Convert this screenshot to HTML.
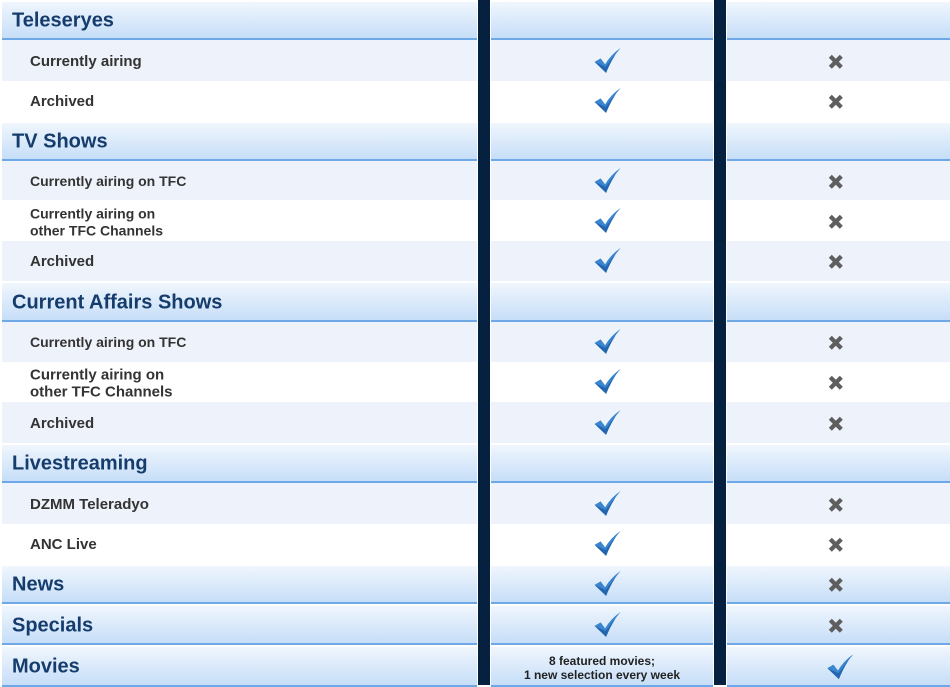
<!DOCTYPE html>
<html><head><style>
body{margin:0;width:950px;height:685px;background:#fff;position:relative;overflow:hidden;font-family:"Liberation Sans",Arial,sans-serif}
.r{position:absolute;left:0;width:950px}
.c{position:absolute;top:0;bottom:0}
.c1{left:2px;width:475px}.c2{left:491px;width:222px}.c3{left:727px;width:223px}
.H .c{background:linear-gradient(#f0f6fd,#c6def8);border-top:2px solid #fff;border-bottom:2px solid #6ea8e6;box-sizing:border-box}
.L .c{background:#eef3fb}
.W .c{background:#fff}
.H .t{position:absolute;left:10px;top:50%;transform:translateY(-45%);font-size:20px;font-weight:bold;color:#153c6c}
.s{position:absolute;left:28px;top:50%;transform:translateY(-46%);font-size:15px;font-weight:bold;color:#333;line-height:17px}
.bar{position:absolute;top:0;height:685px;width:12px;background:#06203f}
.ic{position:absolute;left:50%;top:50%;transform:translate(-30%,-50%)}
.ix{position:absolute;left:50%;top:50%;transform:translate(-70%,-45%)}
.m{position:absolute;left:0;right:0;top:50%;transform:translateY(-42%);text-align:center;font-size:12px;font-weight:bold;color:#222;line-height:14px}
</style></head><body>
<svg width="0" height="0" style="position:absolute"><defs>
<symbol id="ck" viewBox="0 0 28 26"><path d="M1 14 L7 10.5 L11.5 16.5 Q17 7 27 0 Q24 2.5 21 8 Q16 16 12.5 25 Z" fill="#2266b0"/><path d="M1 14 L7 10.5 L11.5 16.5 Q17 7 27 0 Q22 6 12 19 Z" fill="#3a86d0"/></symbol>
<symbol id="x" viewBox="0 0 16 16"><path d="M1 4 L4 1 L8 5 L12 1 L15 4 L11 8 L15 12 L12 15 L8 11 L4 15 L1 12 L5 8 Z" fill="#5e5e5e"/></symbol>
</defs></svg>

<div class="r H" style="top:0;height:40px"><div class="c c1"><span class="t">Teleseryes</span></div><div class="c c2"></div><div class="c c3"></div></div>
<div class="r L" style="top:40px;height:41px"><div class="c c1"><span class="s">Currently airing</span></div><div class="c c2"><svg class="ic" width="28" height="26"><use href="#ck"/></svg></div><div class="c c3"><svg class="ix" width="16" height="16"><use href="#x"/></svg></div></div>
<div class="r W" style="top:81px;height:40px"><div class="c c1"><span class="s">Archived</span></div><div class="c c2"><svg class="ic" width="28" height="26"><use href="#ck"/></svg></div><div class="c c3"><svg class="ix" width="16" height="16"><use href="#x"/></svg></div></div>
<div class="r H" style="top:121px;height:40px"><div class="c c1"><span class="t">TV Shows</span></div><div class="c c2"></div><div class="c c3"></div></div>
<div class="r L" style="top:161px;height:39px"><div class="c c1"><span class="s" style="font-size:14px">Currently airing on TFC</span></div><div class="c c2"><svg class="ic" width="28" height="26"><use href="#ck"/></svg></div><div class="c c3"><svg class="ix" width="16" height="16"><use href="#x"/></svg></div></div>
<div class="r W" style="top:200px;height:41px"><div class="c c1"><span class="s" style="font-size:14px">Currently airing on<br>other TFC Channels</span></div><div class="c c2"><svg class="ic" width="28" height="26"><use href="#ck"/></svg></div><div class="c c3"><svg class="ix" width="16" height="16"><use href="#x"/></svg></div></div>
<div class="r L" style="top:241px;height:40px"><div class="c c1"><span class="s">Archived</span></div><div class="c c2"><svg class="ic" width="28" height="26"><use href="#ck"/></svg></div><div class="c c3"><svg class="ix" width="16" height="16"><use href="#x"/></svg></div></div>
<div class="r H" style="top:281px;height:41px"><div class="c c1"><span class="t">Current Affairs Shows</span></div><div class="c c2"></div><div class="c c3"></div></div>
<div class="r L" style="top:322px;height:40px"><div class="c c1"><span class="s" style="font-size:14px">Currently airing on TFC</span></div><div class="c c2"><svg class="ic" width="28" height="26"><use href="#ck"/></svg></div><div class="c c3"><svg class="ix" width="16" height="16"><use href="#x"/></svg></div></div>
<div class="r W" style="top:362px;height:40px"><div class="c c1"><span class="s">Currently airing on<br>other TFC Channels</span></div><div class="c c2"><svg class="ic" width="28" height="26"><use href="#ck"/></svg></div><div class="c c3"><svg class="ix" width="16" height="16"><use href="#x"/></svg></div></div>
<div class="r L" style="top:402px;height:41px"><div class="c c1"><span class="s">Archived</span></div><div class="c c2"><svg class="ic" width="28" height="26"><use href="#ck"/></svg></div><div class="c c3"><svg class="ix" width="16" height="16"><use href="#x"/></svg></div></div>
<div class="r H" style="top:443px;height:40px"><div class="c c1"><span class="t">Livestreaming</span></div><div class="c c2"></div><div class="c c3"></div></div>
<div class="r L" style="top:483px;height:41px"><div class="c c1"><span class="s">DZMM Teleradyo</span></div><div class="c c2"><svg class="ic" width="28" height="26"><use href="#ck"/></svg></div><div class="c c3"><svg class="ix" width="16" height="16"><use href="#x"/></svg></div></div>
<div class="r W" style="top:524px;height:40px"><div class="c c1"><span class="s">ANC Live</span></div><div class="c c2"><svg class="ic" width="28" height="26"><use href="#ck"/></svg></div><div class="c c3"><svg class="ix" width="16" height="16"><use href="#x"/></svg></div></div>
<div class="r H" style="top:564px;height:40px"><div class="c c1"><span class="t">News</span></div><div class="c c2"><svg class="ic" width="28" height="26"><use href="#ck"/></svg></div><div class="c c3"><svg class="ix" width="16" height="16"><use href="#x"/></svg></div></div>
<div class="r H" style="top:604px;height:41px"><div class="c c1"><span class="t">Specials</span></div><div class="c c2"><svg class="ic" width="28" height="26"><use href="#ck"/></svg></div><div class="c c3"><svg class="ix" width="16" height="16"><use href="#x"/></svg></div></div>
<div class="r H" style="top:645px;height:42px"><div class="c c1"><span class="t">Movies</span></div><div class="c c2"><div class="m">8 featured movies;<br>1 new selection every week</div></div><div class="c c3"><svg class="ic" width="28" height="26" style="transform:translate(-45%,-45%)"><use href="#ck"/></svg></div></div>

<div class="bar" style="left:478px"></div>
<div class="bar" style="left:714px"></div>
</body></html>
